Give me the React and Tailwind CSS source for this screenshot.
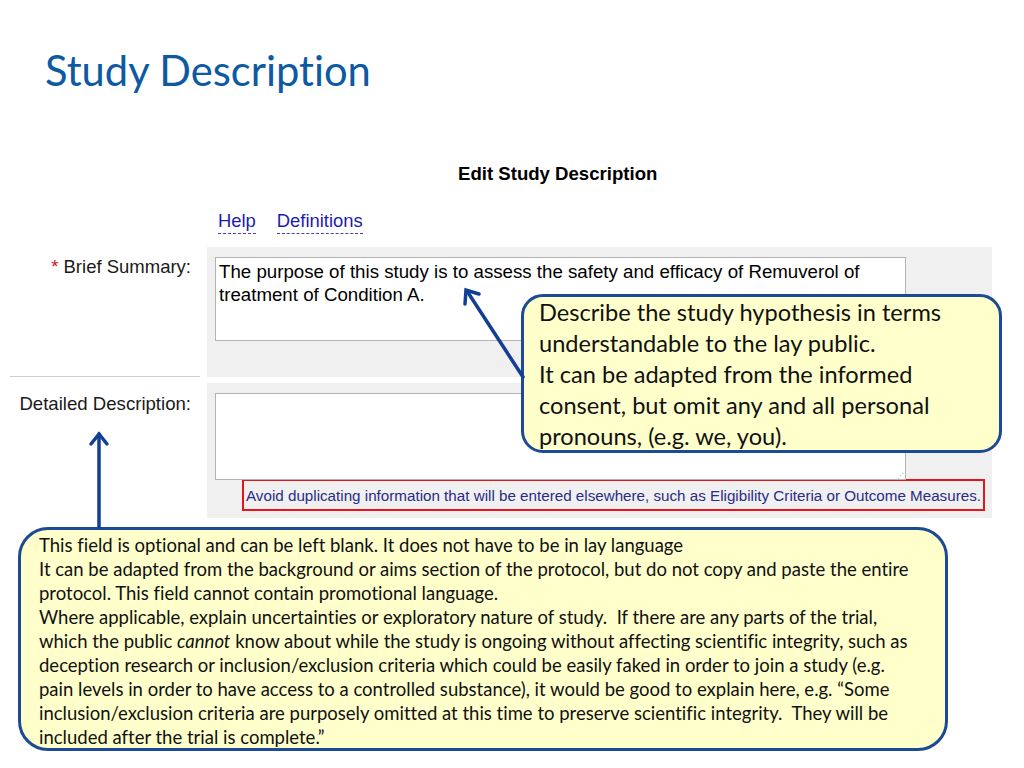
import React from 'react'

const BIG_NOTE = [
    'This field is optional and can be left blank. It does not have to be in lay language',
    'It can be adapted from the background or aims section of the protocol, but do not copy and paste the entire',
    'protocol. This field cannot contain promotional language.',
    'Where applicable, explain uncertainties or exploratory nature of study.\u00a0 If there are any parts of the trial,',
    null,
    'deception research or inclusion/exclusion criteria which could be easily faked in order to join a study (e.g.',
    'pain levels in order to have access to a controlled substance), it would be good to explain here, e.g. \u201cSome',
    'inclusion/exclusion criteria are purposely omitted at this time to preserve scientific integrity.\u00a0 They will be',
    'included after the trial is complete.\u201d',
]

const SMALL_NOTE = [
    'Describe the study hypothesis in terms',
    'understandable to the lay public.',
    'It can be adapted from the informed',
    'consent, but omit any and all personal',
    'pronouns, (e.g. we, you).',
]

const Arrows = () => (
    <svg className="absolute left-0 top-0 pointer-events-none" width="1024" height="768" viewBox="0 0 1024 768">
        <g stroke="#123f94" strokeWidth="3.5" fill="none" strokeLinecap="round" strokeLinejoin="miter">
            <line x1="523" y1="377" x2="467" y2="291" />
            <polyline points="465,304 466,290 479,294" />
            <line x1="99" y1="527" x2="99" y2="434" />
            <polyline points="91,444 99,434 107,444" />
        </g>
    </svg>
)

const App = () => {
    return (
        <div className="relative w-[1024px] h-[768px] bg-white overflow-hidden [font-variant-ligatures:none]">
            <div className="pt-[46px] pl-[45px]">
                <h1 className="text-[41.7px] leading-[48px] text-[#0d5aa2] font-['Lato','Open_Sans',sans-serif]">
                    Study Description
                </h1>
            </div>

            <div className="font-['Liberation_Sans',Arial,sans-serif]">
                <div className="mt-[70px] ml-[458px] h-[20px] text-[18.6px] leading-[20px] font-bold text-black whitespace-nowrap">
                    Edit Study Description
                </div>

                <div className="mt-[27px] ml-[218px] flex gap-[21px] text-[18.4px] leading-[20px] text-[#1c1cb0]">
                    <span className="border-b border-dashed border-[#4040c0] pb-[2px]">Help</span>
                    <span className="border-b border-dashed border-[#4040c0] pb-[2px]">Definitions</span>
                </div>

                <div className="mt-[13px] flex">
                    <div className="ml-[10px] w-[190px] border-b border-[#cfcfcf] text-right pr-[9px] pt-[10px] text-[18.5px] leading-[20px] text-[#1a1a1a] whitespace-nowrap">
                        <span className="text-[#d01010]">*</span> Brief Summary:
                    </div>
                    <div className="ml-[7px] w-[785px] h-[130px] bg-[#f0f0f0] pt-[10px] pl-[8px]">
                        <div className="w-[691px] h-[84px] bg-white border border-[#b4b4b4] px-[3px] pt-[2px] text-[18.7px] leading-[23px] text-black">
                            <div className="whitespace-nowrap">The purpose of this study is to assess the safety and efficacy of Remuverol of</div>
                            <div className="whitespace-nowrap">treatment of Condition A.</div>
                        </div>
                    </div>
                </div>

                <div className="mt-[6px] flex">
                    <div className="ml-[10px] w-[190px] text-right pr-[9px] pt-[11px] text-[18.6px] leading-[20px] text-[#1a1a1a] whitespace-nowrap">
                        Detailed Description:
                    </div>
                    <div className="ml-[7px] w-[785px] h-[135px] bg-[#f0f0f0] pt-[10px] pl-[8px]">
                        <div className="relative w-[691px] h-[87px] bg-white border border-[#b4b4b4]">
                            <span className="absolute right-[1px] bottom-[0px] text-[7px] leading-[7px] text-[#999]">⋰</span>
                        </div>
                        <div className="-mt-[1px] ml-[27px] w-[743px] h-[32px] border-2 border-[#e8141c] flex items-center pl-[2px] pt-[2px] text-[15.2px] leading-[18px] text-[#2b2b85] whitespace-nowrap">
                            Avoid duplicating information that will be entered elsewhere, such as Eligibility Criteria or Outcome Measures.
                        </div>
                    </div>
                </div>
            </div>

            <div className="mt-[9px] ml-[18px] w-[930px] h-[224px] bg-[#ffffcc] border-[3px] border-[#1c4a94] rounded-[30px] pt-[3px] pl-[18px] text-[18.5px] leading-[24px] text-[#111] font-['Lato','Open_Sans',sans-serif]">
                {BIG_NOTE.map((line, i) =>
                    line === null ? (
                        <div key={i} className="whitespace-nowrap">
                            which the public <i>cannot</i> know about while the study is ongoing without affecting scientific integrity, such as
                        </div>
                    ) : (
                        <div key={i} className="whitespace-nowrap">{line}</div>
                    )
                )}
            </div>

            <div className="absolute left-[521px] top-[294px] w-[481px] h-[159px] bg-[#ffffcc] border-[3px] border-[#1c4a94] rounded-[22px] pl-[15px] pt-[0px] text-[23.6px] leading-[31px] text-[#111] font-['Lato','Open_Sans',sans-serif]">
                {SMALL_NOTE.map((line) => (
                    <div key={line} className="whitespace-nowrap">{line}</div>
                ))}
            </div>

            <Arrows />
        </div>
    )
}

export default App
